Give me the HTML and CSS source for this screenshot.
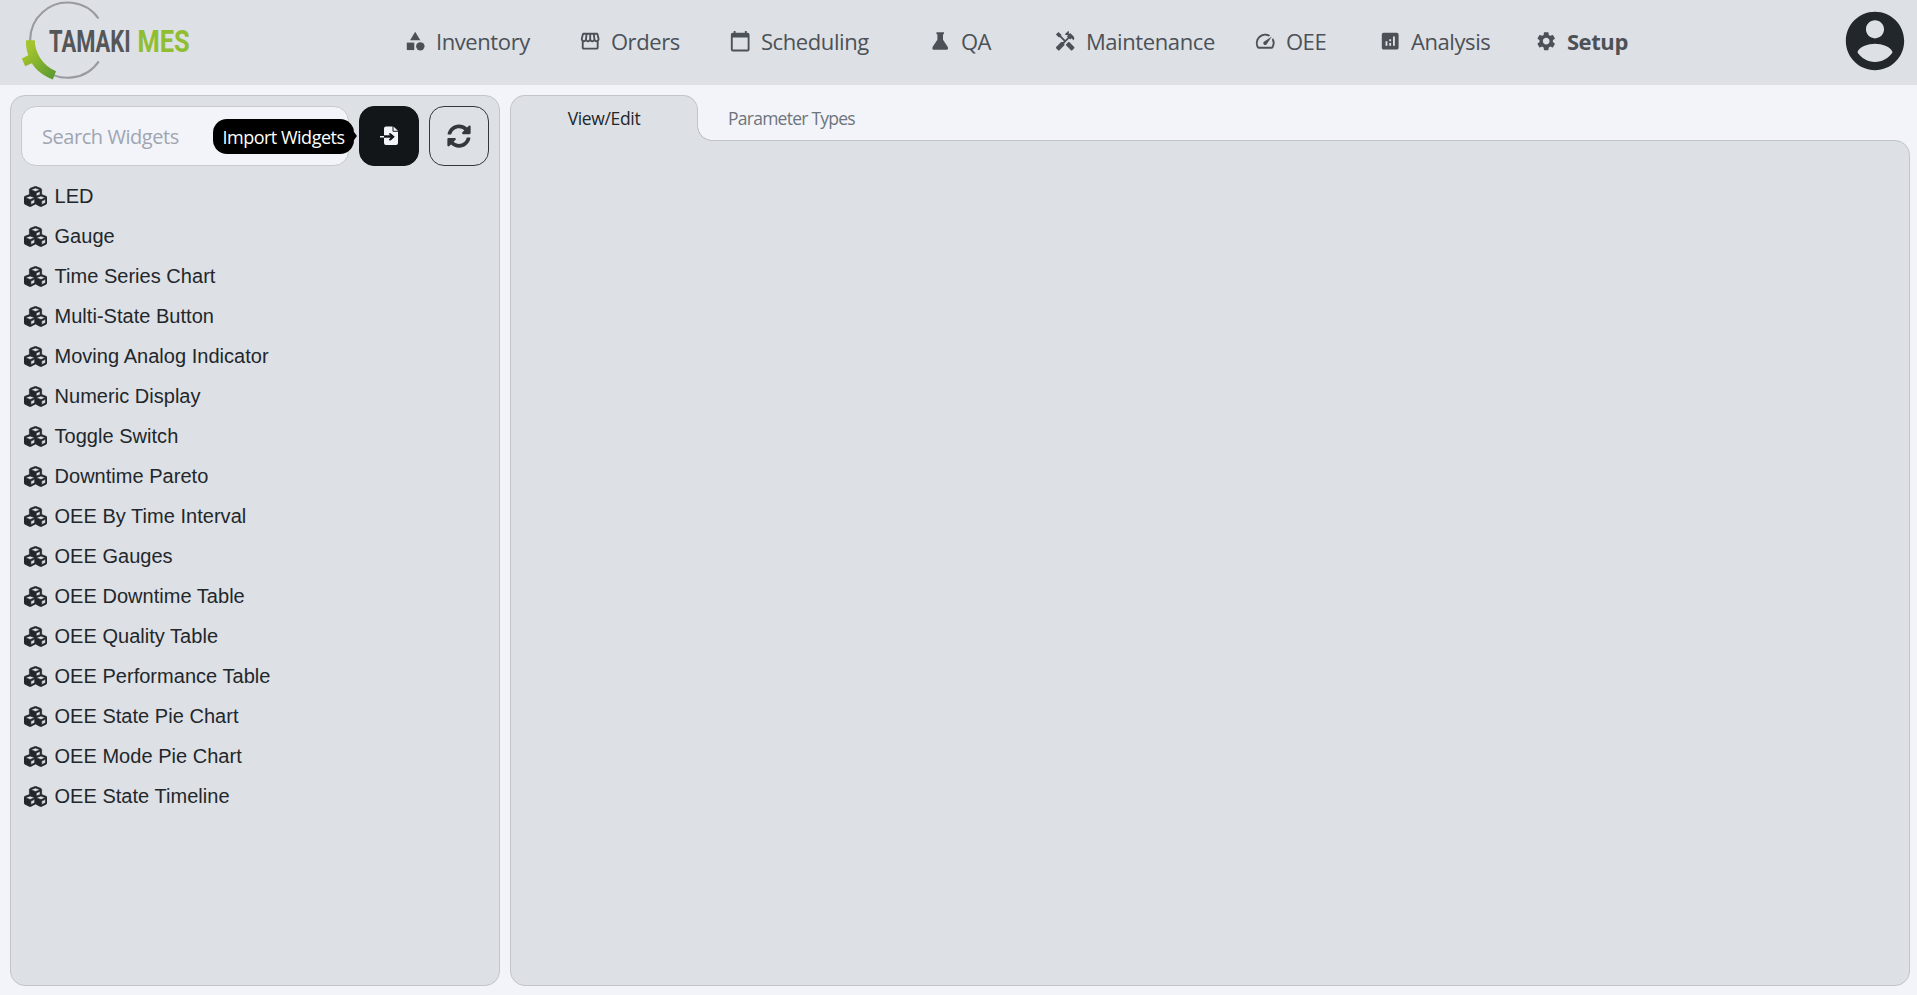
FILE: index.html
```html
<!DOCTYPE html>
<html lang="en">
<head>
<meta charset="utf-8">
<title>Tamaki MES</title>
<link rel="stylesheet" href="styles.css">
</head>
<body>
<svg class="defs" width="0" height="0" aria-hidden="true">
  <symbol id="cubes" viewBox="0 0 512 512"><path d="M488.6 250.2L392 214V105.5c0-15-9.3-28.4-23.4-33.7l-100-37.5c-8.1-3.1-17.1-3.1-25.3 0l-100 37.5c-14.1 5.3-23.4 18.7-23.4 33.7V214l-96.6 36.2C9.3 255.5 0 268.9 0 283.9V394c0 13.6 7.7 26.1 19.9 32.2l100 50c10.1 5.1 22.1 5.1 32.2 0l103.9-52 103.9 52c10.1 5.1 22.1 5.1 32.2 0l100-50c12.2-6.1 19.9-18.6 19.9-32.2V283.9c0-15-9.3-28.4-23.4-33.7zM358 214.8l-85 31.9v-68.2l85-37v73.3zM154 104.1l102-38.2 102 38.2v.6l-102 41.4-102-41.4v-.6zm84 291.1l-85 42.5v-79.1l85-38.8v75.4zm0-112l-102 41.4-102-41.4v-.6l102-38.2 102 38.2v.6zm240 112l-85 42.5v-79.1l85-38.8v75.4zm0-112l-102 41.4-102-41.4v-.6l102-38.2 102 38.2v.6z"/></symbol>
</svg>
<header class="topbar">
  <svg class="logo" viewBox="0 0 200 84">
    <defs><linearGradient id="leaf" x1="0" y1="0" x2="1" y2="1"><stop offset="0.2" stop-color="#a4c42c"/><stop offset="1" stop-color="#559632"/></linearGradient></defs>
    <path d="M98.5 18.5A37.6 37.6 0 1 0 98.8 61.3" fill="none" stroke="#999b9e" stroke-width="2.1"/>
    <path d="M26 40.3L34.8 40.3C34.9 53 42.5 65.500 56 71.300L52.800 79.500C43 75.600 36.200 70.400 31.800 63.300L25.200 66.300L21.800 58.600L28.300 55.300C26.500 50.500 25.900 46 26 40.300z" fill="url(#leaf)"/>
    <text transform="translate(49 52.3) scale(.686 1)" class="logo-name">TAMAKI</text>
    <text transform="translate(137.5 52.3) scale(.795 1)" class="logo-name logo-suffix">MES</text>
  </svg>
  <nav class="nav">
    <a class="link inventory"><svg viewBox="0 0 24 24"><path d="M12 2l-5.500 9h11z"/><circle cx="17.500" cy="17.500" r="4.500"/><path d="M3 13.500h8v8H3z"/></svg><span>Inventory</span></a>
    <a class="link orders"><svg viewBox="0 0 24 24"><path d="M21.900 8.890l-1.050-4.370c-.22-.9-1-1.520-1.910-1.520H5.050c-.9 0-1.690.63-1.900 1.520L2.100 8.890c-.24 1.020-.02 2.060.62 2.880.08.11.19.19.28.29V19c0 1.100.9 2 2 2h14c1.100 0 2-.9 2-2v-6.940c.09-.09.2-.18.28-.28.64-.82.87-1.870.62-2.890zm-2.990-3.900l1.050 4.370c.1.420.01.840-.25 1.170-.14.180-.44.470-.94.470-.61 0-1.140-.49-1.210-1.140L16.980 5l1.930-.01zM13 5h1.960l.54 4.520c.05.390-.07.780-.33 1.070-.22.260-.54.410-.95.410-.67 0-1.220-.59-1.220-1.310V5zM8.490 9.520L9.040 5H11v4.690c0 .72-.55 1.310-1.290 1.310-.34 0-.65-.15-.89-.41-.25-.29-.37-.68-.33-1.070zm-4.450-.16L5.050 5h1.970l-.58 4.860c-.08.650-.6 1.140-1.210 1.140-.49 0-.8-.29-.93-.47-.27-.32-.36-.75-.26-1.170zM5 19v-6.030c.08.010.15.030.23.030.87 0 1.660-.36 2.240-.95.6.6 1.400.95 2.310.95.870 0 1.650-.36 2.230-.93.590.57 1.390.93 2.290.93.840 0 1.640-.35 2.240-.95.580.59 1.370.95 2.240.95.080 0 .15-.02.23-.03V19H5z"/></svg><span>Orders</span></a>
    <a class="link scheduling"><svg viewBox="0 0 24 24"><path d="M20 3h-1V1h-2v2H7V1H5v2H4c-1.100 0-2 .9-2 2v16c0 1.100.9 2 2 2h16c1.100 0 2-.9 2-2V5c0-1.100-.9-2-2-2zm0 18H4V8h16v13z"/></svg><span>Scheduling</span></a>
    <a class="link qa"><svg viewBox="0 0 24 24"><path d="M8 2.500h8v2h-1v6l5 7.500q1.200 3-1.200 3.300H5.200Q2.800 21 4 18l5-7.500v-6H8z"/></svg><span>QA</span></a>
    <a class="link maintenance"><svg viewBox="0 0 24 24"><path d="M21.670 18.170l-5.300-5.300h-.99l-2.540 2.540v.99l5.300 5.300c.39.390 1.020.390 1.410 0l2.120-2.120c.39-.38.390-1.020 0-1.410z"/><path d="M17.340 10.190l1.410-1.410 2.120 2.120c1.170-1.170 1.170-3.070 0-4.240l-3.540-3.540-1.410 1.410V1.710L15.220 1l-3.540 3.540.71.710h2.830l-1.410 1.410 1.060 1.060-2.890 2.890-4.130-4.130V5.060L4.830 2.040 2 4.870 5.030 7.900h1.410l4.130 4.130-.85.850H7.600l-5.300 5.300c-.39.390-.39 1.020 0 1.410l2.120 2.120c.39.390 1.020.390 1.410 0l5.300-5.300v-2.120l5.150-5.150 1.060 1.050z"/></svg><span>Maintenance</span></a>
    <a class="link oee"><svg viewBox="0 0 24 24"><path d="M20.380 8.570l-1.230 1.850a8 8 0 0 1-.22 7.580H5.070A8 8 0 0 1 15.580 6.850l1.850-1.230A10 10 0 0 0 3.350 19a2 2 0 0 0 1.720 1h13.850a2 2 0 0 0 1.740-1 10 10 0 0 0-.27-10.440zM10.590 15.410a2 2 0 0 0 2.830 0l5.660-8.490-8.490 5.660a2 2 0 0 0 0 2.830z"/></svg><span>OEE</span></a>
    <a class="link analysis"><svg viewBox="0 0 24 24"><path d="M19 3H5c-1.100 0-2 .9-2 2v14c0 1.100.9 2 2 2h14c1.100 0 2-.9 2-2V5c0-1.100-.9-2-2-2zM9 17H7v-5h2v5zm4 0h-2v-3h2v3zm0-5h-2v-2h2v2zm4 5h-2V7h2v10z"/></svg><span>Analysis</span></a>
    <a class="link setup"><svg viewBox="0 0 24 24"><path d="M19.140 12.940c.04-.3.060-.61.060-.94 0-.32-.02-.64-.07-.94l2.030-1.580c.18-.14.230-.41.120-.61l-1.920-3.320c-.12-.22-.37-.29-.59-.22l-2.390.96c-.5-.38-1.030-.7-1.620-.94l-.36-2.540c-.04-.24-.24-.41-.48-.41h-3.840c-.24 0-.43.170-.47.410l-.36 2.540c-.59.240-1.130.570-1.620.94l-2.390-.96c-.22-.08-.47 0-.59.220L2.740 8.870c-.12.210-.08.470.12.610l2.030 1.580c-.05.300-.09.630-.09.940s.02.640.070.940l-2.030 1.580c-.18.140-.23.410-.12.610l1.920 3.320c.12.220.370.290.590.220l2.390-.96c.5.380 1.030.7 1.620.94l.36 2.540c.05.240.240.410.480.410h3.840c.24 0 .44-.17.470-.41l.36-2.540c.59-.24 1.130-.56 1.620-.94l2.390.96c.22.080.470 0 .59-.22l1.920-3.320c.12-.22.070-.47-.12-.61l-2.010-1.580zM12 15.600c-1.980 0-3.600-1.620-3.600-3.600s1.620-3.600 3.600-3.600 3.600 1.620 3.600 3.600-1.620 3.600-3.600 3.600z"/></svg><span>Setup</span></a>
  </nav>
  <svg class="avatar" viewBox="0 0 24 24"><path d="M12 2C6.480 2 2 6.480 2 12s4.480 10 10 10 10-4.480 10-10S17.520 2 12 2zm0 2.900c1.720 0 3.100 1.380 3.100 3.100s-1.380 3.100-3.100 3.100-3.100-1.380-3.100-3.100 1.380-3.100 3.100-3.100zm0 14.300c-2.500 0-4.710-1.280-6-3.220.03-1.990 4-3.080 6-3.080 1.990 0 5.970 1.090 6 3.080-1.290 1.940-3.500 3.220-6 3.220z"/></svg>
</header>
<main class="content">
  <aside class="sidebar">
    <div class="tools">
      <div class="search"><input class="search-input" type="text" placeholder="Search Widgets"></div>
      <button class="tool import"><svg viewBox="0 0 20 20"><path d="M6 0.500h6.500v4.200q0 1 1 1H18V17q0 2-2 2H6q-2 0-2-2v-5h6.300v2.700l4.500-3.900-4.500-3.900v2.300H4V2.500q0-2 2-2z"/><path d="M13.500.5L18 4.800h-4.500z"/><path d="M0 10.800h4M4 10.800h9" class="shaft"/><path d="M4 10.800h8.500M9.300 7.500l3.600 3.300-3.600 3.300" class="cut"/></svg><span class="tooltip">Import Widgets</span></button>
      <button class="tool refresh"><svg viewBox="0 0 512 512"><path d="M370.720 133.280C339.458 104.008 298.888 87.962 255.848 88c-77.458.068-144.328 53.178-162.791 126.850-1.344 5.363-6.122 9.150-11.651 9.150H24.103c-7.498 0-13.194-6.807-11.807-14.176C33.933 94.924 134.813 8 256 8c66.448 0 126.791 26.136 171.315 68.685L463.030 40.970C478.149 25.851 504 36.559 504 57.941V192c0 13.255-10.745 24-24 24H345.941c-21.382 0-32.090-25.851-16.971-40.971l41.750-41.749zM32 296h134.059c21.382 0 32.090 25.851 16.971 40.971l-41.750 41.750c31.262 29.273 71.835 45.319 114.876 45.280 77.418-.07 144.315-53.144 162.787-126.849 1.344-5.363 6.122-9.150 11.651-9.150h57.304c7.498 0 13.194 6.807 11.807 14.176C478.067 417.076 377.187 504 256 504c-66.448 0-126.791-26.136-171.315-68.685L48.970 471.030C33.851 486.149 8 475.441 8 454.059V320c0-13.255 10.745-24 24-24z"/></svg></button>
    </div>
    <ul class="widgets">
      <li><svg><use href="#cubes"/></svg>LED</li>
      <li><svg><use href="#cubes"/></svg>Gauge</li>
      <li><svg><use href="#cubes"/></svg>Time Series Chart</li>
      <li><svg><use href="#cubes"/></svg>Multi-State Button</li>
      <li><svg><use href="#cubes"/></svg>Moving Analog Indicator</li>
      <li><svg><use href="#cubes"/></svg>Numeric Display</li>
      <li><svg><use href="#cubes"/></svg>Toggle Switch</li>
      <li><svg><use href="#cubes"/></svg>Downtime Pareto</li>
      <li><svg><use href="#cubes"/></svg>OEE By Time Interval</li>
      <li><svg><use href="#cubes"/></svg>OEE Gauges</li>
      <li><svg><use href="#cubes"/></svg>OEE Downtime Table</li>
      <li><svg><use href="#cubes"/></svg>OEE Quality Table</li>
      <li><svg><use href="#cubes"/></svg>OEE Performance Table</li>
      <li><svg><use href="#cubes"/></svg>OEE State Pie Chart</li>
      <li><svg><use href="#cubes"/></svg>OEE Mode Pie Chart</li>
      <li><svg><use href="#cubes"/></svg>OEE State Timeline</li>
    </ul>
  </aside>
  <section class="editor">
    <div class="tabs">
      <div class="tab active"><span class="view-label">View/Edit</span></div>
      <div class="tab"><span class="param-label">Parameter Types</span></div>
    </div>
    <div class="pane"></div>
  </section>
</main>
</body>
</html>
```
FILE: styles.css
```css
* { box-sizing: border-box; }

body {
  margin: 0;
  height: 995px;
  display: flex;
  flex-direction: column;
  background: #f2f4f9;
  color: #22272b;
  font-family: "Open Sans", "Noto Sans", sans-serif;
  overflow: hidden;
}

.defs { display: none; }
svg { display: block; flex: none; fill: currentColor; }

/* Header */
.topbar {
  flex: none;
  height: 85px;
  display: flex;
  background: #dde0e5;
}
.logo { width: 200px; height: 84px; }
.logo-name { font: bold 32px Roboto, sans-serif; fill: #555658; }
.logo-suffix { fill: #8fbe30; }

.nav {
  display: flex;
  align-items: center;
  height: 83px;
  margin-left: 203.500px;
  color: #4b5157;
  font-size: 22px;
}
.link {
  display: flex;
  align-items: center;
  gap: 10px;
  white-space: nowrap;
  letter-spacing: -0.400px;
}
.link svg { width: 22.4px; height: 22.4px; }
.link span { padding-bottom: 2px; }
.inventory { width: 175px; }
.orders { width: 150px; }
.scheduling { width: 200px; }
.qa { width: 125px; }
.maintenance { width: 200px; }
.oee { width: 125px; }
.analysis { width: 156px; }
.setup { font-weight: 700; }

.avatar {
  width: 70px;
  height: 70px;
  margin: 6px 7px 0 auto;
  color: #22272b;
}

/* Panels */
.content {
  flex: 1;
  display: flex;
  gap: 10px;
  padding: 10px 7px 9px 10px;
}
.sidebar {
  width: 490px;
  padding: 10px;
  border: 1px solid #c1c4c9;
  border-radius: 15px;
  background: #dde0e5;
}
.tools { display: flex; gap: 10px; }
.search {
  width: 328px;
  height: 60px;
  border: 1px solid #c6c9ce;
  border-radius: 15px;
  background: #f2f4f9;
}
.search-input {
  width: 100%;
  height: 58px;
  padding: 1px 20px 0;
  border: 0;
  background: none;
  font: 20px "Open Sans", "Noto Sans", sans-serif;
  letter-spacing: -0.450px;
}
.search-input::placeholder { color: #a0a5b0; opacity: 1; }
.tool {
  position: relative;
  width: 60px;
  height: 60px;
  display: flex;
  align-items: center;
  justify-content: center;
  padding: 0;
  border: 1px solid #32383e;
  border-radius: 15px;
  background: none;
  color: #32383e;
}
.import { border-color: #121619; background: #121619; color: #f2f4f9; }
.import svg { width: 20px; height: 20px; margin-left: 1px; }
.shaft { fill: none; stroke: #f2f4f9; stroke-width: 1.5; }
.cut { fill: none; stroke: #121619; stroke-width: 1.500; }
.refresh svg { width: 24px; height: 24px; }

.tooltip {
  position: absolute;
  right: 64px;
  top: 12px;
  width: 141px;
  height: 35px;
  border-radius: 14px;
  background: #000;
  color: #fff;
  font: 18px/37px "Open Sans", "Noto Sans", sans-serif;
  letter-spacing: -0.500px;
  text-align: center;
  white-space: nowrap;
}
.tooltip::after {
  content: "";
  position: absolute;
  left: 100%;
  top: 13px;
  border: 4px solid transparent;
  border-left: 3px solid #000;
  border-right: 0;
}

.widgets {
  margin: 10px 0 0;
  padding: 0 0 0 3px;
  list-style: none;
  font: 20px "Liberation Sans", Arial, sans-serif;
  letter-spacing: 0.030px;
}
.widgets li {
  display: flex;
  align-items: center;
  gap: 7.500px;
  height: 40px;
}
.widgets svg {
  width: 23px;
  height: 23px;
  overflow: visible;
  stroke: currentColor;
  stroke-width: 14px;
}

/* Editor */
.editor { flex: 1; display: flex; flex-direction: column; }
.tabs { display: flex; height: 45px; font-size: 17.5px; }
.tab {
  height: 46px;
  padding: 0 30px;
  color: #6e747b;
  line-height: 46px;
  white-space: nowrap;
}
.tab.active {
  position: relative;
  width: 188px;
  padding: 0;
  border: 1px solid #c1c4c9;
  border-bottom: 0;
  border-radius: 15px 15px 0 0;
  background: #dde0e5;
  color: #22272b;
  line-height: 44px;
  text-align: center;
}
/* Inverted corner joining the active tab to the pane */
.tab.active::after {
  content: "";
  position: absolute;
  left: 100%;
  bottom: 0;
  width: 15px;
  height: 15px;
  background: radial-gradient(circle at 100% 0, #f2f4f9 13.500px, #c1c4c9 14px, #c1c4c9 14.600px, #dde0e5 15.100px);
}
.view-label { letter-spacing: -0.350px; }
.param-label { letter-spacing: -0.750px; }
.pane {
  flex: 1;
  border: 1px solid #c1c4c9;
  border-radius: 0 15px 15px 15px;
  background: #dde0e5;
}
```
